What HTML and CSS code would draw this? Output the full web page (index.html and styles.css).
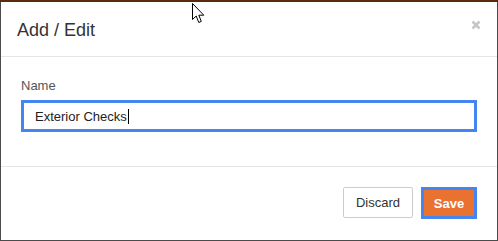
FILE: index.html
```html
<!DOCTYPE html>
<html lang="en">
<head>
    <meta charset="UTF-8">
    <meta name="viewport" content="width=device-width, initial-scale=1.0">
    <title>Add / Edit</title>
    <link rel="stylesheet" href="styles.css">
</head>
<body>
    <div class="modal">
        <div class="modal-header">
            <h4 class="modal-title">Add / Edit</h4>
            <button type="button" class="close" aria-label="Close">
                <svg width="10" height="10" viewBox="0 0 10 10">
                    <path d="M1.5 1.5 L8.5 8.5 M8.5 1.5 L1.5 8.5" stroke="#c6c6c6" stroke-width="2.6" stroke-linecap="butt"/>
                </svg>
            </button>
        </div>

        <div class="modal-body">
            <label for="name">Name</label>
            <div class="input-box">
                <span class="input-text">Exterior Checks</span><span class="caret"></span>
            </div>
        </div>

        <div class="modal-footer">
            <button type="button" class="btn btn-default">Discard</button>
            <button type="button" class="btn btn-save">Save</button>
        </div>
    </div>

    <!-- mouse pointer from the screenshot -->
    <svg class="cursor" width="13" height="21" viewBox="0 0 13 21">
        <path d="M0.5 0.5 L0.5 16.5 L4.2 13 L6.8 19.5 L9.3 18.4 L6.8 12.2 L11.8 12.2 Z" fill="#fff" stroke="#000" stroke-width="1"/>
    </svg>
</body>
</html>
```

FILE: styles.css
```css
html, body {
    height: 100%;
}

body {
    margin: 0;
    padding: 0 1px 1px 1px;
    box-sizing: border-box;
    background-color: #4b4b4b;
    border-top: 2px solid #5a2a0c;
    font-family: "Liberation Sans", Arial, sans-serif;
    color: #333;
}

.modal {
    background: #ffffff;
    height: 100%;
    display: flex;
    flex-direction: column;
}

.modal-header {
    display: flex;
    align-items: flex-start;
    justify-content: space-between;
    height: 54px;
    padding: 0 15px 0 16px;
    border-bottom: 1px solid #e5e5e5;
}

.modal-title {
    margin: 0;
    padding-top: 18px;
    font-size: 18px;
    font-weight: normal;
    line-height: 20px;
    color: #333;
}

.close {
    background: none;
    border: none;
    padding: 0;
    margin-top: 16px;
    margin-right: 1px;
    cursor: pointer;
}

.modal-body {
    height: 110px;
    padding: 20px 20px 0 20px;
    box-sizing: border-box;
    border-bottom: 1px solid #e5e5e5;
}

label {
    display: block;
    font-size: 13px;
    line-height: 18px;
    margin-bottom: 5px;
    color: #555;
}

.input-box {
    height: 32px;
    box-sizing: border-box;
    border: 3px solid #4485f2;
    padding: 0 11px;
    display: flex;
    align-items: center;
    font-size: 13px;
    color: #222;
}

.caret {
    display: inline-block;
    width: 1px;
    height: 15px;
    margin-left: 1px;
    background: #000;
}

.modal-footer {
    display: flex;
    justify-content: flex-end;
    align-items: flex-start;
    padding: 20px 20px 0 20px;
}

.btn {
    height: 32px;
    font-family: "Liberation Sans", Arial, sans-serif;
    font-size: 13px;
    box-sizing: border-box;
    border-radius: 2px;
    cursor: pointer;
}

.btn-default {
    width: 70px;
    background: #fff;
    border: 1px solid #cccccc;
    color: #333;
    height: 31px;
}

.btn-save {
    width: 56px;
    margin-left: 8px;
    background: #ea7231;
    border: 3px solid #4485f2;
    border-radius: 0;
    color: #fff;
    font-weight: bold;
}

.cursor {
    position: absolute;
    left: 192px;
    top: 3px;
}
```
